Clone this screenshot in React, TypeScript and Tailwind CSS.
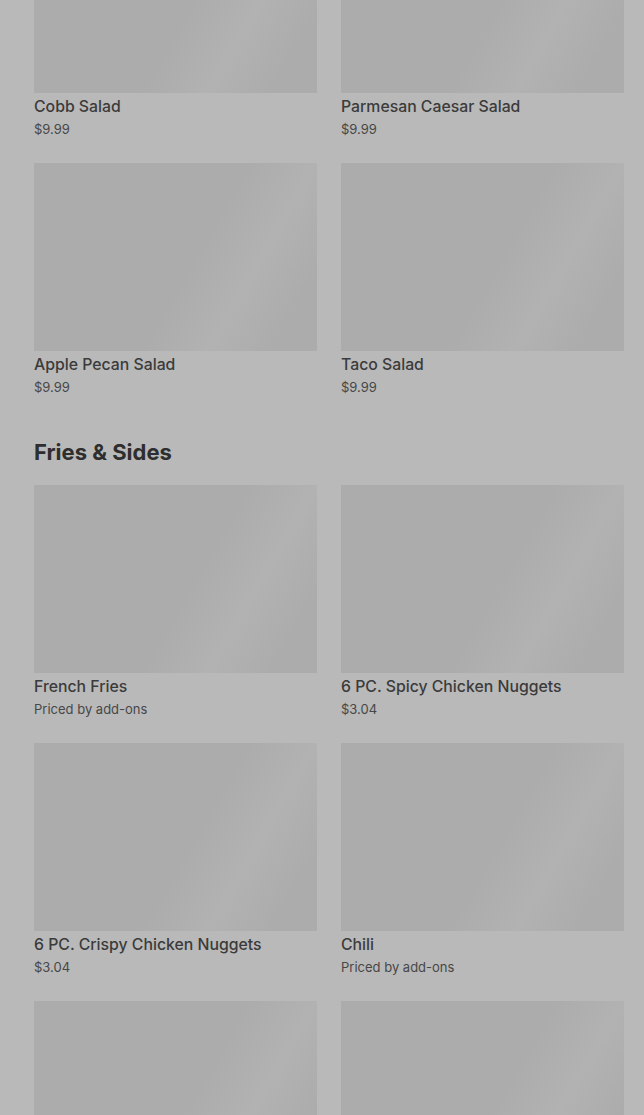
type Item = { name: string; price: string };

const salads: Item[] = [
  { name: "Cobb Salad", price: "$9.99" },
  { name: "Parmesan Caesar Salad", price: "$9.99" },
  { name: "Apple Pecan Salad", price: "$9.99" },
  { name: "Taco Salad", price: "$9.99" },
];

const sides: Item[] = [
  { name: "French Fries", price: "Priced by add-ons" },
  { name: "6 PC. Spicy Chicken Nuggets", price: "$3.04" },
  { name: "6 PC. Crispy Chicken Nuggets", price: "$3.04" },
  { name: "Chili", price: "Priced by add-ons" },
  { name: "", price: "" },
  { name: "", price: "" },
];

function Card({ item }: { item: Item }) {
  return (
    <div className="flex flex-col">
      <div className="h-[188px] bg-[linear-gradient(120deg,#acacac_0%,#acacac_55%,#b2b2b2_72%,#acacac_88%,#acacac_100%)]" />
      {item.name && (
        <div className="mt-0.5 text-[15.8px] leading-6 font-medium text-[#3b3b3b]">
          {item.name}
        </div>
      )}
      {item.price && (
        <div className="text-[13px] leading-5 text-[#474747]">{item.price}</div>
      )}
    </div>
  );
}

export default function App() {
  return (
    <div
      className="h-[1115px] w-full overflow-hidden bg-[#b9b9b9]"
      style={{ fontFamily: "Inter, 'Liberation Sans', sans-serif" }}
    >
      <div className="-mt-[95px] pl-[34px] pr-[20px]">
        <div className="grid grid-cols-2 gap-x-6 gap-y-6">
          {salads.map((s) => (
            <Card key={s.name} item={s} />
          ))}
        </div>
        <h2 className="mt-[39px] mb-[17px] text-[22px] leading-8 font-bold text-[#2e2e2e]">
          Fries &amp; Sides
        </h2>
        <div className="grid grid-cols-2 gap-x-6 gap-y-6">
          {sides.map((s, i) => (
            <Card key={i} item={s} />
          ))}
        </div>
      </div>
    </div>
  );
}
